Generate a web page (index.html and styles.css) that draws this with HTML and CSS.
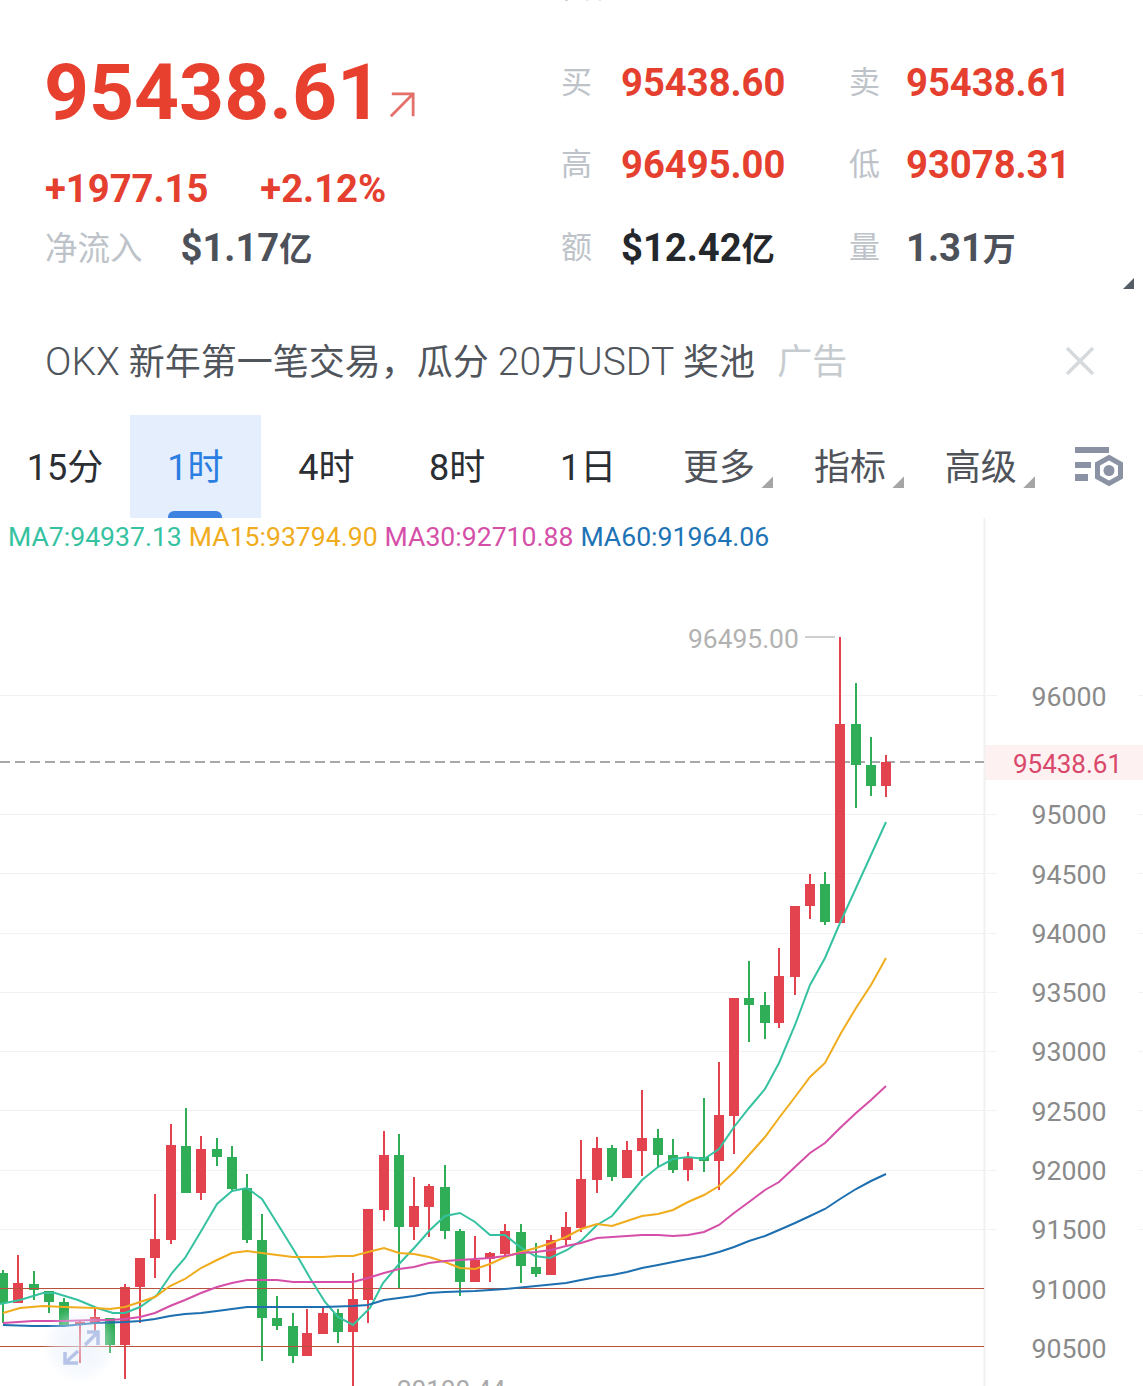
FILE: index.html
```html
<!DOCTYPE html>
<html lang="zh-CN">
<head>
    <meta charset="UTF-8">
    <meta name="viewport" content="width=device-width, initial-scale=1.0">
    <title>BTC 行情</title>
    <link rel="stylesheet" href="styles.css">
</head>
<body>
    <div class="page">
        <div class="top-title">币种</div>

        <!-- 行情 -->
        <div class="quote">
            <div class="quote-left">
                <div class="price-row">
                    <span class="price">95438.61</span>
                    <svg class="price-arrow" viewBox="0 0 28 28" width="26" height="26">
                        <path d="M2 26 L26 2 M3 2 H26 V26" fill="none" stroke="#e3706a" stroke-width="3"/>
                    </svg>
                </div>
                <div class="change-row">
                    <span class="change">+1977.15</span>
                    <span class="change">+2.12%</span>
                </div>
                <div class="inflow-row">
                    <span class="label inflow-label">净流入</span>
                    <span class="value dark">$1.17<span class="unit">亿</span></span>
                </div>
            </div>
            <div class="stats">
                <span class="label">买</span><span class="value red">95438.60</span>
                <span class="label">卖</span><span class="value red">95438.61</span>
                <span class="label">高</span><span class="value red">96495.00</span>
                <span class="label">低</span><span class="value red">93078.31</span>
                <span class="label">额</span><span class="value black">$12.42<span class="unit">亿</span></span>
                <span class="label">量</span><span class="value dark">1.31<span class="unit">万</span></span>
            </div>
            <div class="corner"></div>
        </div>

        <!-- 广告 -->
        <div class="ad">
            <span class="ad-text"><span class="latin">OKX</span> 新年第一笔交易，瓜分 <span class="latin">20</span>万<span class="latin">USDT</span> 奖池</span>
            <span class="ad-tag">广告</span>
            <svg class="ad-close" viewBox="0 0 30 30" width="30" height="30">
                <path d="M2 2 L28 28 M28 2 L2 28" stroke="#d6dadd" stroke-width="3.5"/>
            </svg>
        </div>

        <!-- 周期 -->
        <div class="tabs">
            <div class="tab">15分</div>
            <div class="tab active">1时</div>
            <div class="tab">4时</div>
            <div class="tab">8时</div>
            <div class="tab">1日</div>
            <div class="tab more">更多</div>
            <div class="tab more">指标</div>
            <div class="tab more">高级</div>
            <div class="tab-icon">
                <svg viewBox="0 0 50 40" width="50" height="40">
                    <path d="M1 0 H35 V6 H1 Z M1 15 H17 V21 H1 Z M1 27 H14 V34 H1 Z" fill="#8a92a3"/>
                    <path d="M35 10.5 L46.5 17 V30 L35 36.5 L23.5 30 V17 Z" fill="none" stroke="#8a92a3" stroke-width="5"/>
                    <circle cx="35" cy="23.5" r="5.5" fill="#8a92a3"/>
                </svg>
            </div>
        </div>

        <!-- K线 -->
        <div class="chart">
            <div class="legend">
                <span class="ma7">MA7:94937.13</span>
                <span class="ma15">MA15:93794.90</span>
                <span class="ma30">MA30:92710.88</span>
                <span class="ma60">MA60:91964.06</span>
            </div>
            <svg id="kline" class="kline" viewBox="0 518 1143 868" width="1143" height="868">
                <defs>
                    <radialGradient id="zoomGlow">
                        <stop offset="0" stop-color="#e6eefb" stop-opacity="0.6"/>
                        <stop offset="0.7" stop-color="#e6eefb" stop-opacity="0.35"/>
                        <stop offset="1" stop-color="#e6eefb" stop-opacity="0"/>
                    </radialGradient>
                </defs>
                <g id="grid"></g>
                <rect x="985" y="745" width="158" height="35" fill="#fdf1f1"/>
                <line x1="984.5" y1="518" x2="984.5" y2="1386" stroke="#f1f1f1" stroke-width="2"/>
                <line x1="0" y1="762" x2="984" y2="762" stroke="#a8a8a8" stroke-width="2" stroke-dasharray="10 5"/>
                <g id="candles"></g>
                <line x1="0" y1="1288.5" x2="984" y2="1288.5" stroke="#b8503c"/>
                <line x1="0" y1="1346.5" x2="984" y2="1346.5" stroke="#b8503c"/>
                <g id="lines" fill="none" stroke-width="2"></g>

                <g class="axis">
                    <text x="1069" y="705.5">96000</text>
                    <text x="1069" y="823.5">95000</text>
                    <text x="1069" y="883.5">94500</text>
                    <text x="1069" y="942.5">94000</text>
                    <text x="1069" y="1001.5">93500</text>
                    <text x="1069" y="1060.5">93000</text>
                    <text x="1069" y="1120.5">92500</text>
                    <text x="1069" y="1179.5">92000</text>
                    <text x="1069" y="1238.5">91500</text>
                    <text x="1069" y="1298.5">91000</text>
                    <text x="1069" y="1357.5">90500</text>
                </g>
                <text class="last-price" x="1067.5" y="773">95438.61</text>
                <text class="high-price" x="688" y="648">96495.00</text>
                <line x1="805" y1="637" x2="835" y2="637" stroke="#cfcfcf" stroke-width="2"/>
                <text class="time-label" x="397" y="1399">20100 44</text>

                <circle cx="80" cy="1345" r="38" fill="url(#zoomGlow)"/>
                <path d="M85 1345 L98 1332 M87 1332 H98 V1345 M78 1351 L65 1363 M65 1352 V1363 H78" fill="none" stroke="#b6c4e8" stroke-width="3.5"/>
            </svg>
        </div>
    </div>
    <script src="script.js"></script>
</body>
</html>
```

FILE: styles.css
```css
* {
    margin: 0;
    padding: 0;
    box-sizing: border-box;
}
body {
    background: white;
    font-family: Roboto, "Noto Sans CJK SC", sans-serif;
    overflow: hidden;
}
.page {
    width: 1143px;
    height: 1386px;
    overflow: hidden;
}
.top-title {
    height: 3px;
    overflow: hidden;
    display: flex;
    justify-content: center;
    align-items: flex-end;
    font-size: 28px;
    line-height: 28px;
    color: #8a8f99;
    padding-left: 18px;
}
/* 行情 */
.quote {
    position: relative;
    height: 307px;
    padding-top: 44px;
    display: flex;
}
.quote-left {
    width: 561px;
    padding-left: 45px;
}
.price-row {
    height: 90px;
    display: flex;
    align-items: center;
}
.price {
    margin-left: -1px;
    font-size: 78.5px;
    font-weight: 700;
    line-height: 90px;
    color: #e8402f;
}
.price-arrow {
    margin: 25px 0 0 7px;
}
.change-row {
    margin-top: 30px;
    height: 44px;
    display: flex;
    gap: 52px;
}
.change {
    font-size: 38.2px;
    font-weight: 700;
    line-height: 44px;
    color: #e5402f;
}
.inflow-row {
    margin-top: 16px;
    height: 44px;
    display: flex;
    gap: 38px;
    align-items: center;
}
.label {
    font-size: 31px;
    line-height: 44px;
    color: #bdc3c9;
}
.inflow-label {
    font-size: 32.5px;
}
.value {
    font-size: 38.2px;
    font-weight: 700;
    line-height: 44px;
}
.value .unit {
    font-size: 33px;
}
.red {
    color: #e5402f;
}
.dark {
    color: #4d5159;
}
.black {
    color: #24272b;
}
.stats {
    padding-top: 14px;
    display: grid;
    grid-template-columns: 60px 228px 57px auto;
    grid-auto-rows: 44px;
    row-gap: 38.4px;
    align-content: start;
}
.corner {
    position: absolute;
    right: 9px;
    top: 275px;
    width: 11px;
    height: 11px;
    background: #555c66;
    clip-path: polygon(100% 0, 100% 100%, 0 100%);
}
/* 广告 */
.ad {
    height: 105px;
    padding: 0 48px 8px 45px;
    display: flex;
    align-items: center;
}
.ad-text {
    font-size: 36px;
    color: #50555c;
}
.ad-text .latin {
    font-size: 39px;
    font-weight: 300;
}
.ad-tag {
    margin-left: 22px;
    font-size: 35px;
    color: #c6cbd0;
}
.ad-close {
    margin-left: auto;
    margin-top: 4px;
}
/* 周期 */
.tabs {
    height: 103px;
    display: flex;
}
.tab {
    position: relative;
    width: 130.9px;
    padding-bottom: 6px;
    display: flex;
    justify-content: center;
    align-items: center;
    font-size: 36px;
    color: #2b2e33;
}
.tab:first-child {
    width: 130px;
}
.tab.more {
    color: #50545a;
}
.tab.more::after {
    content: "";
    position: absolute;
    right: 11px;
    top: 61px;
    width: 12px;
    height: 12px;
    background: #a5a5a5;
    clip-path: polygon(100% 0, 100% 100%, 0 100%);
}
.tab.active {
    background: #e4eefc;
    color: #2a7de1;
}
.tab.active::after {
    content: "";
    position: absolute;
    left: 38px;
    bottom: 0;
    width: 54px;
    height: 7px;
    background: #3f83e0;
    border-radius: 6px 6px 0 0;
}
.tab-icon {
    flex: 1;
    display: flex;
    align-items: flex-start;
    padding: 32px 0 0 28px;
}
/* K线 */
.chart {
    position: relative;
    height: 868px;
}
.kline {
    display: block;
}
.legend {
    position: absolute;
    left: 8px;
    top: 3px;
    display: flex;
    gap: 7px;
    font-size: 26.6px;
    line-height: 32px;
    white-space: nowrap;
}
.ma7 {
    color: #36c2a0;
}
.ma15 {
    color: #f0ac1c;
}
.ma30 {
    color: #d54fa8;
}
.ma60 {
    color: #1d73b5;
}
.axis text {
    font-size: 26.7px;
    fill: #8a8a8a;
    text-anchor: middle;
}
.last-price {
    font-size: 26px;
    fill: #d9486a;
    text-anchor: middle;
}
.high-price {
    font-size: 26.4px;
    fill: #b2b2b2;
}
.time-label {
    font-size: 26px;
    fill: #aaaaaa;
}
```

FILE: script.js
```js
// 网格线
const gridYs = [695, 814, 873, 933, 992, 1051, 1110, 1170, 1229];

// K线数据：x, 颜色, 上影, 下影, 实体上, 实体下
const candles = [
    [3, 'g', 1270, 1323, 1273, 1303], [18, 'r', 1255, 1303, 1283, 1303],
    [34, 'g', 1271, 1300, 1284, 1290], [49, 'g', 1291, 1313, 1291, 1302],
    [64, 'g', 1298, 1327, 1302, 1326], [80, 'r', 1320, 1363, 1322, 1325],
    [95, 'r', 1309, 1332, 1317, 1323], [110, 'g', 1318, 1353, 1318, 1345],
    [125, 'r', 1284, 1379, 1287, 1345], [140, 'r', 1258, 1323, 1258, 1287],
    [155, 'r', 1194, 1278, 1239, 1258], [171, 'r', 1124, 1244, 1145, 1240],
    [186, 'g', 1108, 1193, 1146, 1193], [201, 'r', 1136, 1200, 1149, 1193],
    [217, 'g', 1138, 1166, 1149, 1157], [232, 'g', 1146, 1192, 1157, 1189],
    [247, 'g', 1174, 1243, 1188, 1240], [262, 'g', 1214, 1361, 1240, 1318],
    [277, 'g', 1296, 1330, 1318, 1326], [293, 'g', 1313, 1363, 1326, 1356],
    [307, 'r', 1309, 1356, 1333, 1356], [323, 'r', 1306, 1334, 1313, 1334],
    [338, 'g', 1309, 1343, 1313, 1332], [353, 'r', 1273, 1386, 1299, 1332],
    [368, 'r', 1209, 1323, 1209, 1300], [384, 'r', 1131, 1221, 1155, 1210],
    [399, 'g', 1134, 1288, 1155, 1227], [414, 'r', 1177, 1240, 1206, 1227],
    [429, 'r', 1184, 1237, 1186, 1207], [445, 'g', 1165, 1239, 1187, 1231],
    [460, 'g', 1229, 1296, 1231, 1282], [475, 'r', 1236, 1282, 1260, 1282],
    [490, 'r', 1252, 1282, 1253, 1259], [505, 'r', 1224, 1257, 1231, 1254],
    [521, 'g', 1224, 1283, 1232, 1266], [536, 'g', 1243, 1277, 1267, 1274],
    [551, 'r', 1235, 1275, 1240, 1275], [566, 'r', 1212, 1247, 1227, 1240],
    [581, 'r', 1140, 1232, 1179, 1228], [597, 'r', 1137, 1193, 1148, 1180],
    [612, 'g', 1145, 1181, 1148, 1177], [627, 'r', 1141, 1178, 1150, 1178],
    [642, 'r', 1090, 1176, 1138, 1151], [658, 'g', 1129, 1167, 1138, 1155],
    [673, 'g', 1139, 1173, 1155, 1170], [688, 'r', 1152, 1181, 1158, 1170],
    [704, 'g', 1098, 1172, 1157, 1161], [719, 'r', 1062, 1190, 1115, 1161],
    [734, 'r', 998, 1154, 998, 1116], [749, 'g', 961, 1042, 998, 1005],
    [765, 'g', 992, 1039, 1005, 1023], [779, 'r', 948, 1028, 976, 1023],
    [795, 'r', 906, 995, 906, 977], [810, 'r', 874, 919, 884, 906],
    [825, 'g', 872, 925, 884, 922], [840, 'r', 637, 923, 724, 923],
    [856, 'g', 683, 808, 724, 765], [871, 'g', 737, 796, 765, 786],
    [886, 'r', 755, 797, 762, 786]
];

// 均线
const maLines = [
    ['#36c2a0', '0,1304 20,1300 43,1293 55,1293 78,1300 97,1308 113,1313 125,1313 140,1307 157,1295 172,1273 185,1258 200,1233 217,1204 232,1191 247,1188 262,1199 277,1223 295,1252 310,1278 325,1302 338,1317 353,1325 370,1308 383,1283 400,1263 415,1247 430,1230 445,1216 460,1213 475,1222 490,1235 505,1235 520,1247 535,1256 550,1258 567,1250 582,1240 597,1225 612,1216 627,1198 642,1180 658,1167 673,1159 688,1157 704,1159 719,1149 734,1127 749,1108 765,1089 779,1063 795,1025 810,985 825,958 840,923 856,888 871,855 886,822'],
    ['#f0ac1c', '3,1313 20,1308 43,1306 64,1307 95,1308 110,1309 125,1307 140,1302 155,1297 170,1286 185,1279 201,1268 217,1260 232,1253 247,1251 262,1253 277,1255 293,1257 307,1257 323,1257 338,1256 353,1256 368,1252 384,1248 399,1253 414,1254 429,1257 445,1262 460,1268 475,1269 490,1264 505,1257 521,1252 536,1248 551,1243 566,1237 581,1229 597,1224 612,1226 627,1221 642,1216 658,1214 673,1210 688,1202 704,1195 719,1186 734,1172 749,1155 765,1137 779,1118 795,1097 810,1077 825,1063 841,1033 856,1008 871,985 886,958'],
    ['#d54fa8', '3,1323 33,1321 64,1321 95,1320 110,1320 125,1319 140,1317 155,1313 170,1306 185,1300 201,1293 217,1287 232,1283 247,1280 262,1280 277,1280 293,1282 307,1282 323,1282 338,1282 353,1282 368,1278 384,1273 399,1269 414,1267 429,1263 445,1261 460,1260 475,1259 490,1258 505,1256 521,1253 536,1252 551,1250 566,1246 581,1243 597,1238 612,1237 627,1236 642,1235 658,1235 673,1236 688,1235 704,1232 719,1225 734,1213 749,1202 765,1190 779,1182 795,1167 810,1153 825,1143 840,1128 856,1113 871,1100 886,1086'],
    ['#1d6fb0', '3,1325 33,1326 64,1326 95,1323 125,1322 140,1321 155,1319 170,1316 185,1314 201,1313 217,1311 232,1309 247,1307 262,1307 293,1307 323,1307 353,1306 368,1305 384,1300 399,1298 414,1296 429,1293 445,1292 475,1291 505,1289 536,1286 566,1283 581,1280 597,1277 612,1275 627,1272 642,1268 658,1265 673,1262 688,1259 704,1256 719,1252 734,1247 749,1241 765,1236 779,1230 795,1223 810,1216 825,1209 840,1199 856,1189 871,1181 886,1174']
];

const SVG_NS = 'http://www.w3.org/2000/svg';
const colors = { r: '#e2434f', g: '#2fae57' };

function add(parentId, tag, attrs) {
    const el = document.createElementNS(SVG_NS, tag);
    Object.keys(attrs).forEach(k => el.setAttribute(k, attrs[k]));
    document.getElementById(parentId).appendChild(el);
}

gridYs.forEach(y => {
    add('grid', 'line', { x1: 0, y1: y + 0.5, x2: 997, y2: y + 0.5, stroke: '#f2f2f2' });
    add('grid', 'line', { x1: 1138, y1: y + 0.5, x2: 1143, y2: y + 0.5, stroke: '#f2f2f2' });
});

candles.forEach(c => {
    const [x, color, high, low, top, bottom] = c;
    add('candles', 'rect', { x: x - 1, y: high, width: 2, height: low - high, fill: colors[color] });
    add('candles', 'rect', { x: x - 5, y: top, width: 10, height: bottom - top, fill: colors[color] });
});

maLines.forEach(m => {
    add('lines', 'polyline', { points: m[1], stroke: m[0] });
});
```
